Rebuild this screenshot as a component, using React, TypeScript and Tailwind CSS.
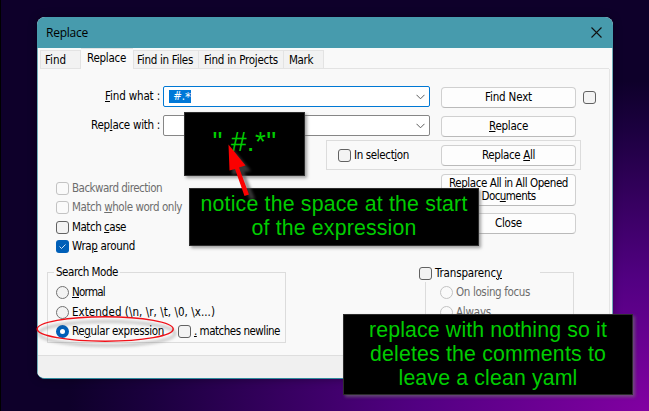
import { useLayoutEffect, useRef, useState } from "react";
import type { ReactNode } from "react";

/** Single line of text whose tracking is adjusted so that it fills a given width. */
function Fit({ w, className = "", children }: { w: number; className?: string; children: ReactNode }) {
  const ref = useRef<HTMLSpanElement>(null);
  const [spacing, setSpacing] = useState(0);
  useLayoutEffect(() => {
    const el = ref.current;
    if (!el) return;
    const natural = el.getBoundingClientRect().width;
    const count = (el.textContent ?? "").length;
    if (count > 0) setSpacing((w - natural) / count);
  }, [w]);
  return (
    <span ref={ref} className={"inline-block shrink-0 whitespace-pre " + className} style={{ letterSpacing: spacing }}>
      {children}
    </span>
  );
}

const U = ({ children }: { children: ReactNode }) => (
  <span className="underline decoration-1 underline-offset-[1px]">{children}</span>
);

function Box({ checked, disabled }: { checked?: boolean; disabled?: boolean }) {
  if (checked)
    return (
      <span className="flex size-[13px] shrink-0 items-center justify-center rounded-[3px] bg-[#005fb8]">
        <svg viewBox="0 0 13 13" className="size-[13px]" fill="none" stroke="#cfe3f5" strokeWidth="1">
          <path d="M3.5 6.5 5.5 8.5 9.5 4.5" />
        </svg>
      </span>
    );
  return (
    <span
      className={
        "size-[13px] shrink-0 rounded-[3px] border " +
        (disabled ? "border-[#c3c3c3] bg-[#fafafa]" : "border-[#626262] bg-[#f3f3f3]")
      }
    />
  );
}

function Radio({ checked, disabled }: { checked?: boolean; disabled?: boolean }) {
  if (checked)
    return <span className="size-[13px] shrink-0 rounded-full border-4 border-[#005fb8] bg-white" />;
  return (
    <span
      className={
        "size-[13px] shrink-0 rounded-full border " +
        (disabled ? "border-[#c3c3c3] bg-[#fafafa]" : "border-[#727272] bg-[#f3f3f3]")
      }
    />
  );
}

function Option({ control, w, disabled, children }: { control: ReactNode; w: number; disabled?: boolean; children: ReactNode }) {
  return (
    <label className={"flex h-[13px] items-center gap-[3px] " + (disabled ? "text-[#6d6d6d]" : "text-black")}>
      {control}
      <Fit w={w}>{children}</Fit>
    </label>
  );
}

function Button({ className = "h-[21px]", children }: { className?: string; children: ReactNode }) {
  return (
    <button
      className={
        "flex w-[135px] shrink-0 flex-col items-center justify-center rounded-[4px] border border-[#d0d0d0] border-b-[#bababa] bg-[#fdfdfd] leading-[13px] " +
        className
      }
    >
      {children}
    </button>
  );
}

function Combo({ active, children }: { active?: boolean; children?: ReactNode }) {
  return (
    <div
      className={
        "ml-[3px] flex h-[21px] w-[267px] shrink-0 items-center justify-between rounded-[2px] border bg-white pr-1 pl-[5px] " +
        (active ? "border-[#0078d4]" : "border-[#868686]")
      }
    >
      <span className="flex">{children}</span>
      <svg viewBox="0 0 9 6" className="h-1.5 w-[9px]" fill="none" stroke="#5c5c5c" strokeWidth="1">
        <path d="M.5 .8 4.5 4.8 8.5 .8" />
      </svg>
    </div>
  );
}

function Tab({ className, w, children }: { className: string; w: number; children: string }) {
  return (
    <div className={"flex h-[19px] shrink-0 items-center border-t border-r border-b border-[#e3e3e3] bg-[#f2f2f2] pt-px " + className}>
      <Fit w={w}>{children}</Fit>
    </div>
  );
}

const noteBase =
  "absolute flex flex-col items-center border border-[#2c2c2c] bg-black font-['Liberation_Sans',Arial,sans-serif] text-[#00cc00] shadow-[2px_2px_3px_rgba(110,110,110,0.65)] ";

export default function App() {
  return (
    <div className="relative h-[411px] w-[649px] overflow-hidden border-l border-black bg-[radial-gradient(ellipse_580px_330px_at_100%_100%,#8200a2_0%,#520082_40%,#380062_62%,#1c0040_85%,#0e002a_100%)] pt-[17px] pl-9 font-['DejaVu_Sans_Condensed','DejaVu_Sans',Tahoma,sans-serif] text-[11.5px] leading-[13px] text-black">
      <main className="relative flex h-[362px] w-[576px] flex-col overflow-hidden rounded-[8px] border-b border-[#2f8b9d] bg-[#f9f9f9] shadow-[0_0_8px_rgba(0,0,0,0.35)]">
        <header className="flex h-[31px] shrink-0 items-center justify-between bg-[#479bad] pr-[11px] pl-[9px]">
          <Fit w={42} className="font-['Open_Sans','Noto_Sans',sans-serif] text-[12px]">Replace</Fit>
          <svg viewBox="0 0 11 11" className="size-[11px]" stroke="#111" strokeWidth="1.1">
            <path d="M.5 .5 10.5 10.5M10.5 .5 .5 10.5" />
          </svg>
        </header>

        <div className="flex min-h-0 flex-1 flex-col border-x border-[#72aeba]">
          <nav className="flex h-[21px] shrink-0 items-end pr-[3px] pl-0.5">
            <Tab w={21} className="w-[41px] border-l pl-1">Find</Tab>
            <div className="flex h-[21px] w-[52px] shrink-0 items-center border-t border-[#e3e3e3] bg-[#f9f9f9] pb-0.5 pl-1.5">
              <Fit w={39}>Replace</Fit>
            </div>
            <Tab w={56} className="w-[66px] border-l pl-[3px]">Find in Files</Tab>
            <Tab w={74} className="w-[85px] pl-[5px]">Find in Projects</Tab>
            <Tab w={24} className="w-[40px] pl-[5px]">Mark</Tab>
            <span className="h-px flex-1 bg-[#e3e3e3]" />
          </nav>

          <section className="mr-[2px] flex h-[286px] shrink-0 flex-col border-r border-[#e5e5e5] pt-[17px]">
            <div className="flex h-[21px]">
              <div className="flex w-[122px] items-center justify-end"><Fit w={55}><U>F</U>ind what :</Fit></div>
              <Combo active>
                <span className="mb-px flex bg-[#0078d7] pl-px text-white">
                  <Fit w={15}>{" #."}</Fit>
                  <span className="w-1.5 text-[13px]">*</span>
                </span>
              </Combo>
              <div className="mt-px ml-[11px]"><Button><Fit w={47}>Find Next</Fit></Button></div>
              <div className="mt-[5px] ml-[7px] flex"><Box /></div>
            </div>

            <div className="mt-2 flex h-[21px]">
              <div className="flex w-[122px] items-center justify-end"><Fit w={69}>Rep<U>l</U>ace with :</Fit></div>
              <Combo />
              <div className="mt-px ml-[11px]"><Button><Fit w={39}><U>R</U>eplace</Fit></Button></div>
            </div>

            <div className="mt-1 ml-[288px] flex h-[30px] w-[255px] items-center justify-between border border-[#dcdcdc] pr-[4px] pl-[11px]">
              <Option w={55} control={<Box />}>In select<U>i</U>on</Option>
              <Button><Fit w={53}>Replace <U>A</U>ll</Fit></Button>
            </div>

            <div className="mt-1 flex h-[81px] justify-between pr-[33px] pl-[18px]">
              <div className="flex flex-col pt-2">
                <Option disabled w={90} control={<Box disabled />}>Backward direction</Option>
                <div className="mt-1.5"><Option disabled w={110} control={<Box disabled />}>Match <U>w</U>hole word only</Option></div>
                <div className="mt-[7px]"><Option w={54} control={<Box />}>Match <U>c</U>ase</Option></div>
                <div className="mt-1.5"><Option w={63} control={<Box checked />}>Wra<U>p</U> around</Option></div>
              </div>
              <div className="flex flex-col gap-[7px]">
                <Button className="h-8">
                  <Fit w={119}>Replace All in All Opened</Fit>
                  <Fit w={54}>Doc<U>u</U>ments</Fit>
                </Button>
                <Button><Fit w={27}>Close</Fit></Button>
              </div>
            </div>

            <div className="mt-[17px] flex justify-between pr-[35px] pl-[9px]">
              <fieldset className="relative h-[71px] w-[239px] border border-[#dcdcdc] pt-[13px] pl-2">
                <span className="absolute -top-[7px] left-1.5 bg-[#f9f9f9] px-0.5"><Fit w={62}>Search Mode</Fit></span>
                <Option w={33} control={<Radio />}><U>N</U>ormal</Option>
                <div className="mt-[7px]"><Option w={143} control={<Radio />}>E<U>x</U>tended (\n, \r, \t, \0, \x...)</Option></div>
                <div className="mt-1.5 flex gap-[14px]">
                  <Option w={92} control={<Radio checked />}>Re<U>g</U>ular expression</Option>
                  <Option w={86} control={<Box />}><U>.</U> matches newline</Option>
                </div>
              </fieldset>
              <fieldset className="relative h-[71px] w-[149px] border border-[#dcdcdc] pt-[13px] pl-[14px]">
                <div className="absolute -top-1.5 -left-[7px] flex h-[15px] w-[121px] bg-[#f9f9f9]">
                  <Option w={67} control={<Box />}>Transparenc<U>y</U></Option>
                </div>
                <Option disabled w={74} control={<Radio disabled />}>On losing focus</Option>
                <div className="mt-[7px]"><Option disabled w={35} control={<Radio disabled />}>Always</Option></div>
              </fieldset>
            </div>
          </section>

          <footer className="flex-1 border-t border-[#dedede] bg-[#f0f0f0]" />
        </div>
      </main>

      <svg className="absolute top-[310px] left-[32px] h-[40px] w-[150px] overflow-visible" fill="none">
        <ellipse cx="74" cy="23.5" rx="68" ry="12" stroke="#555" strokeOpacity=".35" strokeWidth="2.5" className="blur-[1.5px]" />
        <ellipse cx="72.2" cy="19" rx="68" ry="12.2" stroke="#f01018" strokeWidth="1.5" />
      </svg>

      <div className={noteBase + "top-[112px] left-[183px] h-[64px] w-[121px] justify-center pb-1 text-[28px] leading-[32px]"}>
        <Fit w={64}>{'" #.*"'}</Fit>
      </div>
      <div className={noteBase + "top-[188px] left-[188px] h-[58px] w-[290px] pt-[3px] text-[21.3px] leading-[24px]"}>
        <Fit w={267}>notice the space at the start</Fit>
        <Fit w={165}>of the expression</Fit>
      </div>
      <div className={noteBase + "top-[314px] left-[342px] h-[81px] w-[290px] pt-[3px] text-[21.3px] leading-[24px]"}>
        <Fit w={238}>replace with nothing so it</Fit>
        <Fit w={236}>deletes the comments to</Fit>
        <Fit w={179}>leave a clean yaml</Fit>
      </div>

      <svg className="absolute top-[140px] left-[220px] h-[64px] w-[40px]">
        <path d="M11 8 30 31 23 32 34 59 29 60 19 33 11 35Z" fill="#555" opacity=".65" className="blur-[1.5px]" />
        <path d="M7.5 4.5 24.5 25.5 18 27.5 28 54.5 23.5 56 14 29 8.5 30.5Z" fill="#fb0000" />
      </svg>
    </div>
  );
}
